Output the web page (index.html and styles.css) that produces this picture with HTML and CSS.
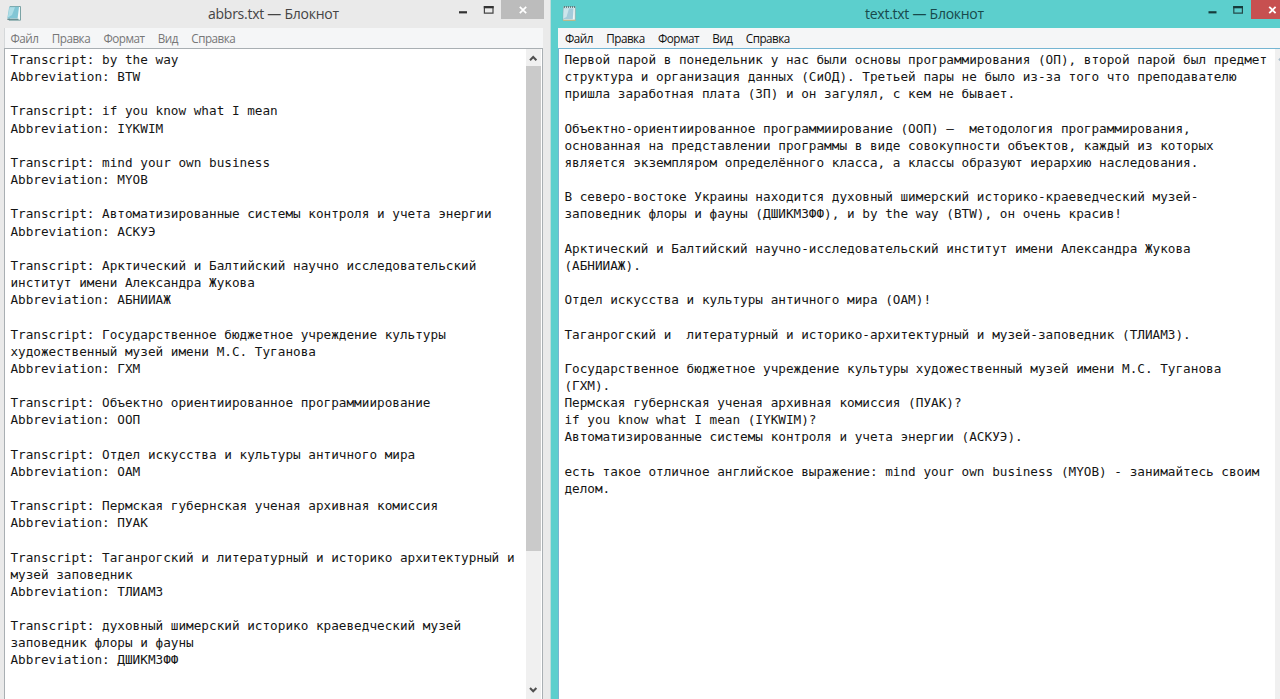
FILE: index.html
```
<!DOCTYPE html>
<html lang="ru">
<head>
<meta charset="utf-8">
<title>Блокнот</title>
<link rel="stylesheet" href="styles.css">
</head>
<body>
<main class="desktop">
<section class="window inactive">
  <header class="titlebar">
    <svg class="app-icon" width="16" height="17" viewBox="0 0 16 17"><path d="M4 1.5H14.5V15.2H3Z" fill="#f3f8f8" stroke="#6d9a9c" stroke-width=".9"/><path d="M3.2 1.8H13L11.6 13.6H1.3Z" fill="#83c6d5"/><path d="M3.6 2.2H9L6 10L1.8 12.5Z" fill="#aedde6"/><path d="M1.3 14.3H12.5" stroke="#547a7e"/></svg>
    <h1 class="title">abbrs.txt — Блокнот</h1>
    <div class="controls">
      <svg class="control-icons" width="44" height="19" viewBox="0 0 44 19"><path d="M2 12.3H10" stroke="#333" stroke-width="2.2"/><path d="M27.4 6.5H36V13.2H27.4Z" fill="none" stroke="#444" stroke-width="1.2"/><path d="M26.8 7.2H36.6" stroke="#333" stroke-width="2.2"/></svg>
      <span class="close"><svg width="43" height="19" viewBox="0 0 43 19"><path d="M18.8 6.8L25.2 13.2M25.2 6.8L18.8 13.2" stroke="#fff" stroke-width="1.7"/></svg></span>
    </div>
  </header>
  <nav class="menu"><span>Файл</span><span>Правка</span><span>Формат</span><span>Вид</span><span>Справка</span></nav>
  <div class="client">
    <pre class="text">Transcript: by the way
Abbreviation: BTW

Transcript: if you know what I mean
Abbreviation: IYKWIM

Transcript: mind your own business
Abbreviation: MYOB

Transcript: Автоматизированные системы контроля и учета энергии
Abbreviation: АСКУЭ

Transcript: Арктический и Балтийский научно исследовательский
институт имени Александра Жукова
Abbreviation: АБНИИАЖ

Transcript: Государственное бюджетное учреждение культуры
художественный музей имени М.С. Туганова
Abbreviation: ГХМ

Transcript: Объектно ориентиированное программиирование
Abbreviation: ООП

Transcript: Отдел искусства и культуры античного мира
Abbreviation: ОАМ

Transcript: Пермская губернская ученая архивная комиссия
Abbreviation: ПУАК

Transcript: Таганрогский и литературный и историко архитектурный и
музей заповедник
Abbreviation: ТЛИАМЗ

Transcript: духовный шимерский историко краеведческий музей
заповедник флоры и фауны
Abbreviation: ДШИКМЗФФ</pre>
    <div class="scrollbar">
      <svg width="15" height="17" viewBox="0 0 15 17"><path d="M4 11.3L7.2 8L10.4 11.3" fill="none" stroke="#505050" stroke-width="2"/></svg>
      <div class="thumb"></div>
      <svg class="down" width="15" height="17" viewBox="0 0 15 17"><path d="M4 6L7.2 9.3L10.4 6" fill="none" stroke="#505050" stroke-width="2"/></svg>
    </div>
  </div>
</section>
<section class="window active">
  <header class="titlebar">
    <svg class="app-icon" width="16" height="17" viewBox="0 0 16 17"><path d="M2.5 1.8H14.3V15.3H2Z" fill="#eef5f5" stroke="#8aa6a6" stroke-width=".7"/><path d="M2.6 3.2H12.6L11.8 14.2H2.2Z" fill="#a5cbda"/><path d="M2.8 3.4H8L5.5 12L2.3 13.5Z" fill="#cce5eb"/><path d="M3 1.9H14" stroke="#496a6c" stroke-width="1.5" stroke-dasharray="1 1"/><path d="M2 15.3H14.5" stroke="#c5b983"/></svg>
    <h1 class="title">text.txt — Блокнот</h1>
    <div class="controls">
      <svg class="control-icons" width="44" height="19" viewBox="0 0 44 19"><path d="M1.5 12.3H9.5" stroke="#163b3b" stroke-width="2.2"/><path d="M26.8 6.5H35.4V13.2H26.8Z" fill="none" stroke="#244949" stroke-width="1.2"/><path d="M26.2 7.2H36" stroke="#163b3b" stroke-width="2.2"/></svg>
      <span class="close"><svg width="43" height="19" viewBox="0 0 43 19"><path d="M18.2 6.8L24.6 13.2M24.6 6.8L18.2 13.2" stroke="#fff" stroke-width="1.8"/></svg></span>
    </div>
  </header>
  <nav class="menu"><span>Файл</span><span>Правка</span><span>Формат</span><span>Вид</span><span>Справка</span></nav>
  <div class="client">
    <pre class="text">Первой парой в понедельник у нас были основы программирования (ОП), второй парой был предмет
структура и организация данных (СиОД). Третьей пары не было из-за того что преподавателю
пришла заработная плата (ЗП) и он загулял, с кем не бывает.

Объектно-ориентиированное программиирование (ООП) —  методология программирования,
основанная на представлении программы в виде совокупности объектов, каждый из которых
является экземпляром определённого класса, а классы образуют иерархию наследования.

В северо-востоке Украины находится духовный шимерский историко-краеведческий музей-
заповедник флоры и фауны (ДШИКМЗФФ), и by the way (BTW), он очень красив!

Арктический и Балтийский научно-исследовательский институт имени Александра Жукова
(АБНИИАЖ).

Отдел искусства и культуры античного мира (ОАМ)!

Таганрогский и  литературный и историко-архитектурный и музей-заповедник (ТЛИАМЗ).

Государственное бюджетное учреждение культуры художественный музей имени М.С. Туганова
(ГХМ).
Пермская губернская ученая архивная комиссия (ПУАК)?
if you know what I mean (IYKWIM)?
Автоматизированные системы контроля и учета энергии (АСКУЭ).

есть такое отличное английское выражение: mind your own business (MYOB) - занимайтесь своим
делом.</pre>
    <div class="scrollbar"><svg width="15" height="17" viewBox="0 0 15 17"><path d="M4 11.3L7.2 8L10.4 11.3" fill="none" stroke="#a9bccb" stroke-width="2"/></svg></div>
  </div>
</section>
</main>
</body>
</html>
```
FILE: styles.css
```
* { box-sizing: border-box; }
body { margin: 0; overflow: hidden; background: #e8e8e8; }
.desktop { display: grid; grid-template-columns: 551px 741px; width: 1280px; height: 699px; overflow: hidden; }
.window { display: flex; flex-direction: column; height: 699px; min-width: 0; }
.inactive { background: #eaeaea; padding: 0 7px 0 4px; border-right: 1px solid #bcdcdb; }
.active { background: #5ccfcd; padding-left: 7px; }
.titlebar { display: flex; align-items: flex-start; height: 28px; flex: none; }
.app-icon { margin: 5px 0 0 2px; flex: none; }
.active .app-icon { margin-left: 3px; }
.title { flex: 1; margin: 0; font: 400 14px/28px "Open Sans", "Noto Sans", sans-serif; color: #444; white-space: pre; letter-spacing: -.26px; }
.inactive .title { padding-left: 186px; }
.active .title { padding-left: 288px; color: #17494b; }
.controls { display: flex; flex: none; }
.control-icons { display: block; }
.close { width: 43px; height: 19px; background: #bcbcbc; }
.close svg { display: block; }
.active .close { background: #c75050; }
.inactive .controls { margin-right: -1px; }
.active .controls { margin-right: -2px; }
.menu { display: flex; align-items: center; height: 20px; flex: none; background: #f5f6f7; border-left: 1px solid #d5d8da; padding-left: 5.5px; gap: 13.3px; font: 11.7px/20px "Open Sans", "Noto Sans", sans-serif; letter-spacing: -.5px; color: #777; }
.active .menu { color: #111; border-left: 0; padding-left: 7px; }
.client { display: flex; flex: 1; min-height: 0; background: #fff; border: solid #a9afb3; border-width: 1px 1px 0; padding-right: 1px; }
.active .client { border-color: #75b5d2; }
.text { flex: 1; min-width: 0; margin: 0; padding: 2px 0 0 5.4px; font: 12.69px/17.16px "DejaVu Sans Mono", monospace; color: #151515; white-space: pre; overflow: hidden; }
.scrollbar { display: flex; flex-direction: column; width: 15px; flex: none; background: #f0f0f0; }
.scrollbar svg { display: block; flex: none; }
.thumb { height: 485px; background: #cacaca; }
.down { margin-top: auto; }
```
